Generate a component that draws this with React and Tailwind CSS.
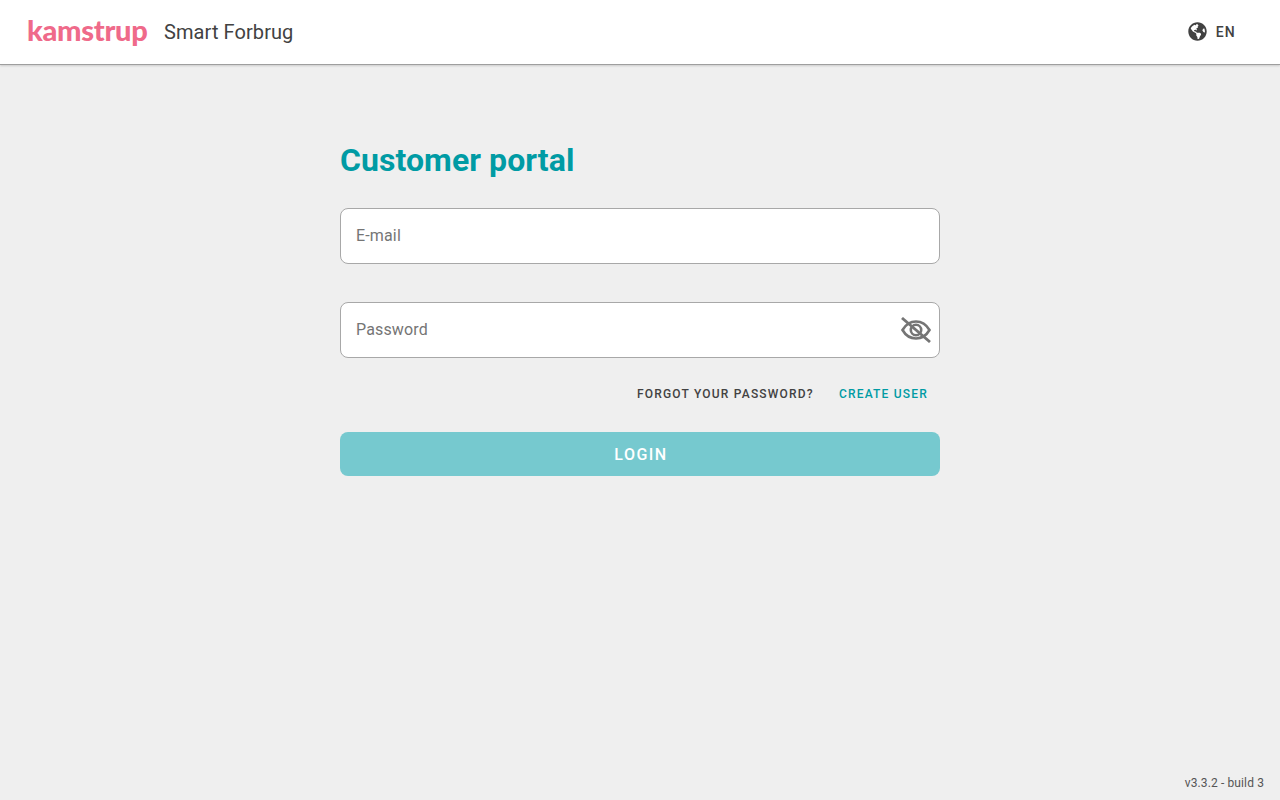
import React from "react";
import { FaGlobeAmericas } from "react-icons/fa";

function EyeOff() {
  return (
    <svg width="32" height="26" viewBox="0 0 32 26" fill="none" stroke="#757575" strokeWidth="2.6">
      <path d="M2.5 13C6 7 10.500 4.500 16 4.500s10 2.500 13.500 8.500C26 19 21.500 21.500 16 21.500S6 19 2.500 13Z" />
      <circle cx="16" cy="13" r="5.200" />
      <path d="M2 1l28 24" strokeWidth="2.800" />
    </svg>
  );
}

export default function App() {
  return (
    <div className="min-h-[800px] flex flex-col bg-[#efefef] font-['Roboto',sans-serif] text-[#424242]">
      <header className="h-[65px] bg-white border-b border-[#9e9e9e] shadow-[0_1px_2px_rgba(0,0,0,0.15)] flex items-center pl-[27px] pr-[44px]">
        <span className="w-[121px] mb-[5px] font-['Lato',sans-serif] font-black text-[29px] leading-none text-[#ef6a8a] tracking-[-0.3px]">kamstrup</span>
        <span className="ml-[16px] text-[20px] tracking-[0.08px]">Smart Forbrug</span>
        <div className="ml-auto flex items-center gap-[9px]">
          <FaGlobeAmericas className="text-[19px] text-[#424242] mb-[2px]" />
          <span className="text-[14px] font-medium tracking-[1.25px]">EN</span>
        </div>
      </header>

      <main className="flex-1 w-[600px] mx-auto pt-[74px]">
        <h1 className="text-[32px] leading-[42px] font-bold text-[#009ba4] tracking-[0.07px]">Customer portal</h1>

        <div className="mt-[27px] h-[56px] bg-white border border-[#a8a8a8] rounded-[8px] flex items-center px-[15px] text-[16px] text-[#757575] tracking-[0.15px]">
          E-mail
        </div>

        <div className="mt-[38px] h-[56px] bg-white border border-[#a8a8a8] rounded-[8px] flex items-center justify-between pl-[15px] pr-[7px] text-[16px] text-[#757575] tracking-[0.15px]">
          Password
          <EyeOff />
        </div>

        <div className="mt-[28px] h-[16px] flex justify-end items-center gap-[25px] pr-[12px] text-[12px] font-medium tracking-[1.2px]">
          <span>FORGOT YOUR PASSWORD?</span>
          <span className="text-[#009ba4]">CREATE USER</span>
        </div>

        <button className="mt-[30px] w-full h-[44px] pt-[1px] pl-[2px] bg-[#76c9cf] rounded-[8px] text-white text-[16px] font-medium tracking-[1.5px]">
          LOGIN
        </button>
      </main>

      <footer className="h-[34px] flex justify-end items-center pr-[16px] text-[12px] text-[#555555] tracking-[0.12px]">
        v3.3.2 - build 3
      </footer>
    </div>
  );
}
